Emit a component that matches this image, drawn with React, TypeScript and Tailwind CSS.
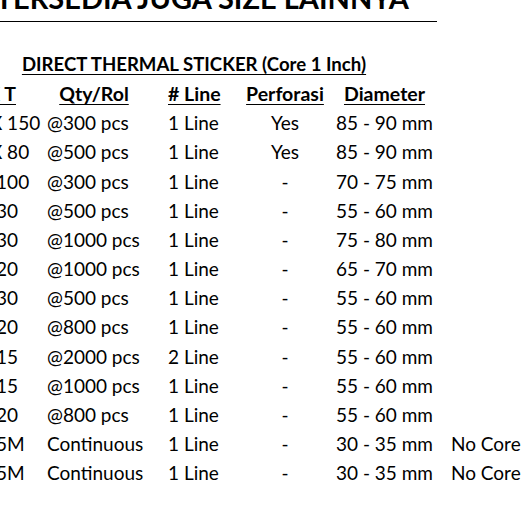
const rows = [
  { size: "100 X 150", qty: "@300 pcs", line: "1 Line", perf: "Yes", dia: "85 - 90 mm", note: "" },
  { size: "100 X 80", qty: "@500 pcs", line: "1 Line", perf: "Yes", dia: "85 - 90 mm", note: "" },
  { size: "80 X 100", qty: "@300 pcs", line: "1 Line", perf: "-", dia: "70 - 75 mm", note: "" },
  { size: "50 X 30", qty: "@500 pcs", line: "1 Line", perf: "-", dia: "55 - 60 mm", note: "" },
  { size: "80 X 30", qty: "@1000 pcs", line: "1 Line", perf: "-", dia: "75 - 80 mm", note: "" },
  { size: "50 X 20", qty: "@1000 pcs", line: "1 Line", perf: "-", dia: "65 - 70 mm", note: "" },
  { size: "40 X 30", qty: "@500 pcs", line: "1 Line", perf: "-", dia: "55 - 60 mm", note: "" },
  { size: "40 X 20", qty: "@800 pcs", line: "1 Line", perf: "-", dia: "55 - 60 mm", note: "" },
  { size: "33 X 15", qty: "@2000 pcs", line: "2 Line", perf: "-", dia: "55 - 60 mm", note: "" },
  { size: "30 X 15", qty: "@1000 pcs", line: "1 Line", perf: "-", dia: "55 - 60 mm", note: "" },
  { size: "30 X 20", qty: "@800 pcs", line: "1 Line", perf: "-", dia: "55 - 60 mm", note: "" },
  { size: "58 X 5M", qty: "Continuous", line: "1 Line", perf: "-", dia: "30 - 35 mm", note: "No Core" },
  { size: "80 X 5M", qty: "Continuous", line: "1 Line", perf: "-", dia: "30 - 35 mm", note: "No Core" },
];

const grid = "grid grid-cols-[85px_121px_68px_98px_101px_1fr] h-[29.17px] leading-[29.17px] whitespace-nowrap";
const head = "underline decoration-1 underline-offset-[3px]";

export default function App() {
  return (
    <div className="w-[521px] h-[521px] overflow-hidden bg-white text-black font-['Lato',sans-serif]">
      {/* Title, top is cut off like the original crop */}
      <div className="-mt-[17px] -ml-[60px] w-[497px] border-b border-black pb-[9px] pr-[28px] flex justify-end text-[29px] leading-[29px] font-bold whitespace-nowrap">
        TERSEDIA JUGA SIZE LAINNYA
      </div>

      <div className="-ml-[38px] mt-[28px] text-[19px]">
        <div className={`h-[29.17px] leading-[29.17px] w-[464px] text-center text-[18.6px] font-bold ${head}`}>
          DIRECT THERMAL STICKER (Core 1 Inch)
        </div>

        {/* Header */}
        <div className={`${grid} font-bold text-[19.5px]`}>
          <div className="flex justify-end pr-[31px]">
            <span className={head}>P X L X T</span>
          </div>
          <div className={`w-[94px] text-center ${head}`}>Qty/Rol</div>
          <div className={head}># Line</div>
          <div className={`text-center ${head}`}>Perforasi</div>
          <div className={`text-center ${head}`}>Diameter</div>
          <div />
        </div>

        {rows.map((r, i) => (
          <div key={i} className={grid}>
            <div className="-ml-[10px]">{r.size}</div>
            <div>{r.qty}</div>
            <div>{r.line}</div>
            <div className="text-center">{r.perf}</div>
            <div className="text-center">{r.dia}</div>
            <div className="pl-[16px]">{r.note}</div>
          </div>
        ))}
      </div>
    </div>
  );
}
